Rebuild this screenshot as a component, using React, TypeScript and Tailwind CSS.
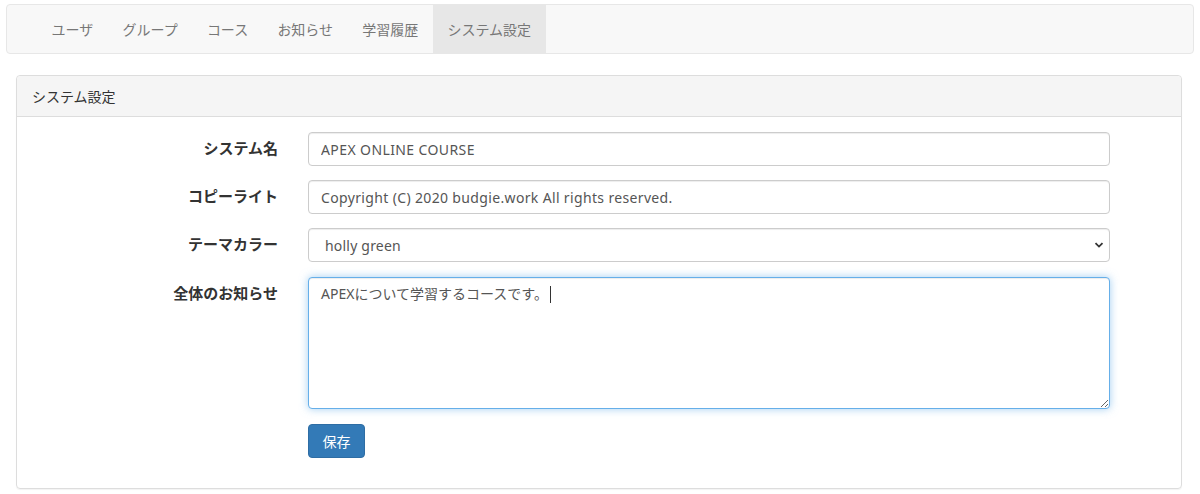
const navItems = ["ユーザ", "グループ", "コース", "お知らせ", "学習履歴", "システム設定"];

const font = "font-['Noto_Sans','Noto_Sans_CJK_JP',sans-serif]";

function Field({ label, gap = "mb-[14px]", children }: { label: string; gap?: string; children: React.ReactNode }) {
    return (
        <div className={"flex items-start " + gap}>
            <label className="w-[246px] shrink-0 text-right font-bold text-[15px] text-[#333] pt-[6px] leading-[21px]">
                {label}
            </label>
            <div className="ml-[30px] w-[802px]">{children}</div>
        </div>
    );
}

export default function App() {
    const inputCls =
        "block w-full h-[34px] px-3 text-[14px] text-[#555] bg-white border border-[#ccc] rounded-[4px] shadow-[inset_0_1px_1px_rgba(0,0,0,0.075)] outline-none";

    return (
        <div className={`${font} bg-white w-[1200px] h-[494px] pt-[4px] px-[6px]`}>
            {/* navbar */}
            <nav className="h-[50px] bg-[#f8f8f8] border border-[#e7e7e7] rounded-[4px] flex pl-[30px]">
                {navItems.map((item, i) => (
                    <a
                        key={i}
                        className={
                            "px-[14.6px] flex items-center text-[14px] text-[#777] " +
                            (i === navItems.length - 1 ? "bg-[#e7e7e7] text-[#555]" : "")
                        }
                    >
                        {item}
                    </a>
                ))}
            </nav>

            {/* panel */}
            <div className="mt-[21px] ml-[10px] w-[1166px] border border-[#ddd] rounded-[4px] shadow-[0_1px_1px_rgba(0,0,0,0.05)]">
                <div className="h-[41px] bg-[#f5f5f5] border-b border-[#ddd] px-[15px] flex items-center text-[14px] text-[#333] rounded-t-[4px]">
                    システム設定
                </div>
                <div className="px-[15px] pt-[15px] pb-[30px]">
                    <Field label="システム名">
                        <input className={inputCls + " tracking-[0.4px]"} defaultValue="APEX ONLINE COURSE" />
                    </Field>
                    <Field label="コピーライト">
                        <input
                            className={inputCls + " tracking-[0.35px]"}
                            defaultValue="Copyright (C) 2020 budgie.work All rights reserved."
                        />
                    </Field>
                    <Field label="テーマカラー" gap="mb-[15px]">
                        <div className="relative">
                            <select
                                className={inputCls + " appearance-none pl-[16px] tracking-[0.2px]"}
                                defaultValue="holly green"
                            >
                                <option>holly green</option>
                            </select>
                            <svg
                                className="absolute right-[6px] top-[12px]"
                                width="10"
                                height="10"
                                viewBox="0 0 10 10"
                                fill="none"
                                stroke="#333"
                                strokeWidth="1.8"
                            >
                                <path d="M1.5 3.2 L5 6.6 L8.5 3.2" />
                            </svg>
                        </div>
                    </Field>
                    <Field label="全体のお知らせ">
                        <div className="relative">
                            <textarea
                                className="block w-full h-[132px] px-3 py-[6px] text-[14px] leading-[20px] text-[#555] bg-white border border-[#66afe9] rounded-[4px] shadow-[inset_0_1px_1px_rgba(0,0,0,0.075),0_0_8px_rgba(102,175,233,0.6)] outline-none"
                                defaultValue="APEXについて学習するコースです。 "
                            />
                            <span className="absolute left-[242px] top-[9px] w-px h-[17px] bg-[#333]" />
                        </div>
                    </Field>
                    <div className="ml-[276px] pt-[1px]">
                        <button className="h-[34px] w-[57px] text-[14px] text-white bg-[#337ab7] border border-[#2e6da4] rounded-[4px]">
                            保存
                        </button>
                    </div>
                </div>
            </div>
        </div>
    );
}
